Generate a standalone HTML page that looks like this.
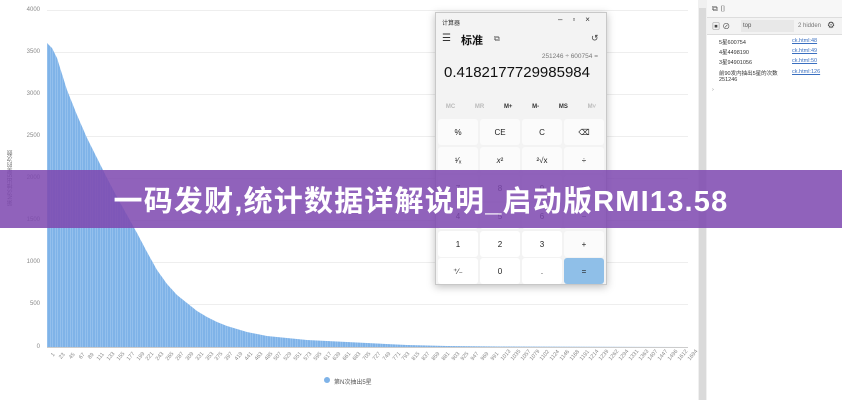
<!DOCTYPE html>
<html><head><meta charset="utf-8"><style>
*{margin:0;padding:0;box-sizing:border-box}
body{width:842px;height:400px;overflow:hidden;background:#fff;font-family:"Liberation Sans","Noto Sans CJK SC",sans-serif;position:relative}
.abs{position:absolute}
.yl{position:absolute;left:0;width:40px;text-align:right;font-size:6px;color:#888}
.gl{position:absolute;left:47px;width:641px;height:1px;background:#eee}
.xl{position:absolute;left:44px;top:352px;width:648px;display:flex;justify-content:space-between}
.xl span{font-size:5.5px;color:#888;transform:rotate(-50deg);transform-origin:right top;width:8px;text-align:right;white-space:nowrap;display:block}
.calc{position:absolute;left:435px;top:12px;width:172px;height:273px;background:#f3f3f3;border:1px solid #c8c8c8;box-shadow:0 2px 8px rgba(0,0,0,.25)}
.btn{position:absolute;width:40px;height:26px;background:#fbfbfb;border-radius:3px;font-size:8px;color:#222;display:flex;align-items:center;justify-content:center}
.band{position:absolute;left:0;top:170px;width:842px;height:58px;background:rgba(126,72,176,.86);color:#fff;font-weight:bold;font-size:29px;display:flex;align-items:center;justify-content:center;letter-spacing:1.2px}
.dt{font-size:5.5px;color:#333;position:absolute}
.lk{font-size:5.5px;color:#3a6fc0;text-decoration:underline;position:absolute;left:792px}
</style></head><body>
<div class="gl" style="top:10px"></div><div class="gl" style="top:52px"></div><div class="gl" style="top:94px"></div><div class="gl" style="top:136px"></div><div class="gl" style="top:178px"></div><div class="gl" style="top:220px"></div><div class="gl" style="top:262px"></div><div class="gl" style="top:304px"></div><div class="gl" style="top:347px;background:#ccc"></div>
<div class="yl" style="top:7px">4000</div><div class="yl" style="top:49px">3500</div><div class="yl" style="top:91px">3000</div><div class="yl" style="top:133px">2500</div><div class="yl" style="top:175px">2000</div><div class="yl" style="top:217px">1500</div><div class="yl" style="top:259px">1000</div><div class="yl" style="top:301px">500</div><div class="yl" style="top:344px">0</div>
<div class="abs" style="left:6px;top:150px;font-size:6px;color:#777;writing-mode:vertical-rl;transform:rotate(180deg)">第N次抽出5星的次数</div>
<svg class="abs" style="left:0;top:0" width="700" height="400">
<defs><pattern id="p" width="2.5" height="10" patternUnits="userSpaceOnUse"><rect width="2.5" height="10" fill="#7fb3e8"/><rect width="0.5" height="10" fill="#a9cdf2"/></pattern></defs>
<polygon fill="url(#p)" points="47,347 47,43 52,48 57,58 67,90 77,115 87,138 97,158 107,178 117,197 127,215 137,233 147,252 157,270 167,284 177,295 187,303 197,311 207,317 217,322 227,326 247,332 267,336 287,338 307,340 327,341 367,343 407,345 447,346 500,346.5 688,347"/>
</svg>
<div class="xl"><span>1</span><span>23</span><span>45</span><span>67</span><span>89</span><span>111</span><span>133</span><span>155</span><span>177</span><span>199</span><span>221</span><span>243</span><span>265</span><span>287</span><span>309</span><span>331</span><span>353</span><span>375</span><span>397</span><span>419</span><span>441</span><span>463</span><span>485</span><span>507</span><span>529</span><span>551</span><span>573</span><span>595</span><span>617</span><span>639</span><span>661</span><span>683</span><span>705</span><span>727</span><span>749</span><span>771</span><span>793</span><span>815</span><span>837</span><span>859</span><span>881</span><span>903</span><span>925</span><span>947</span><span>969</span><span>991</span><span>1013</span><span>1035</span><span>1057</span><span>1079</span><span>1102</span><span>1124</span><span>1146</span><span>1168</span><span>1191</span><span>1214</span><span>1239</span><span>1262</span><span>1294</span><span>1331</span><span>1363</span><span>1407</span><span>1447</span><span>1496</span><span>1612</span><span>1694</span></div>
<div class="abs" style="left:324px;top:377px;width:6px;height:6px;border-radius:50%;background:#7fb3e8"></div>
<div class="abs" style="left:334px;top:377px;font-size:6px;color:#555">第N次抽出5星</div>
<div class="abs" style="left:698px;top:0;width:9px;height:400px;background:#f0f0f0"></div>
<div class="abs" style="left:699px;top:8px;width:7px;height:392px;background:#dadada"></div>
<div class="abs" style="left:707px;top:0;width:135px;height:18px;background:#f7f7f7;border-bottom:1px solid #ddd"></div>
<div class="abs" style="left:712px;top:4px;font-size:8px;color:#555">⧉ ▯</div>
<div class="abs" style="left:707px;top:18px;width:135px;height:17px;background:#f3f3f3;border-bottom:1px solid #ddd"></div>
<div class="abs" style="left:712px;top:21px;font-size:8px;color:#444">▣ ⊘</div>
<div class="abs" style="left:741px;top:20px;width:53px;height:12px;background:#e8e8e8;font-size:6px;color:#555;padding:3px 2px">top</div>
<div class="abs" style="left:798px;top:23px;font-size:6px;color:#777">2 hidden</div>
<div class="abs" style="left:827px;top:20px;font-size:9px;color:#444">⚙</div>
<div class="dt" style="left:719px;top:38px">5星600754</div><div class="lk" style="top:38px">ck.html:48</div>
<div class="dt" style="left:719px;top:48px">4星4498190</div><div class="lk" style="top:48px">ck.html:49</div>
<div class="dt" style="left:719px;top:58px">3星94901056</div><div class="lk" style="top:58px">ck.html:50</div>
<div class="dt" style="left:719px;top:69px">前90发内抽出5星的次数<br>251246</div><div class="lk" style="top:69px">ck.html:126</div>
<div class="dt" style="left:712px;top:87px;color:#888">›</div>
<div class="calc">
<div class="abs" style="left:6px;top:5px;font-size:6px;color:#333">计算器</div>
<div class="abs" style="left:122px;top:2px;font-size:8px;color:#333;letter-spacing:10px">–▫×</div>
<div class="abs" style="left:6px;top:20px;font-size:10px;color:#333">☰</div>
<div class="abs" style="left:25px;top:19px;font-size:11px;font-weight:bold;color:#111">标准</div>
<div class="abs" style="left:58px;top:21px;font-size:8px;color:#555">⧉</div>
<div class="abs" style="left:155px;top:20px;font-size:9px;color:#444">↺</div>
<div class="abs" style="right:8px;top:40px;font-size:6.5px;color:#777">251246 ÷ 600754 =</div>
<div class="abs" style="left:8px;top:51px;font-size:15px;color:#111">0.4182177729985984</div>
<div class="abs" style="left:0;top:91px;width:170px;display:flex;justify-content:space-around;font-size:6px;font-weight:bold;color:#333"><span style="color:#bbb">MC</span><span style="color:#bbb">MR</span><span>M+</span><span>M-</span><span>MS</span><span style="color:#bbb">M˅</span></div>
<div class="btn" style="left:2px;top:106px">%</div><div class="btn" style="left:44px;top:106px">CE</div><div class="btn" style="left:86px;top:106px">C</div><div class="btn" style="left:128px;top:106px">⌫</div>
<div class="btn" style="left:2px;top:134px">¹⁄ₓ</div><div class="btn" style="left:44px;top:134px"><i>x</i>²</div><div class="btn" style="left:86px;top:134px">²√x</div><div class="btn" style="left:128px;top:134px">÷</div>
<div class="btn" style="left:2px;top:162px;background:#fff">7</div><div class="btn" style="left:44px;top:162px;background:#fff">8</div><div class="btn" style="left:86px;top:162px;background:#fff">9</div><div class="btn" style="left:128px;top:162px">×</div>
<div class="btn" style="left:2px;top:190px;background:#fff">4</div><div class="btn" style="left:44px;top:190px;background:#fff">5</div><div class="btn" style="left:86px;top:190px;background:#fff">6</div><div class="btn" style="left:128px;top:190px">−</div>
<div class="btn" style="left:2px;top:218px;background:#fff">1</div><div class="btn" style="left:44px;top:218px;background:#fff">2</div><div class="btn" style="left:86px;top:218px;background:#fff">3</div><div class="btn" style="left:128px;top:218px">+</div>
<div class="btn" style="left:2px;top:245px;background:#fff">⁺∕₋</div><div class="btn" style="left:44px;top:245px;background:#fff">0</div><div class="btn" style="left:86px;top:245px;background:#fff">.</div><div class="btn" style="left:128px;top:245px;background:#8fbfe8">=</div>
</div>
<div class="band">一码发财,统计数据详解说明_启动版RMI13.58</div>
</body></html>
